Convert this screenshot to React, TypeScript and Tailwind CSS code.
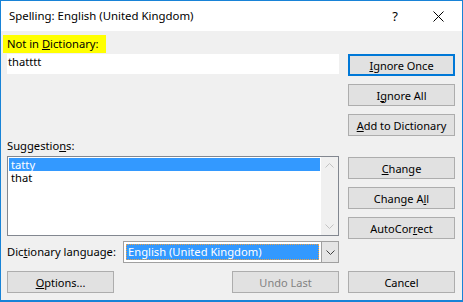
import type { ReactNode } from "react";

const FONT = "font-['Segoe_UI','Noto_Sans','Open_Sans',sans-serif]";

function U({ children }: { children: ReactNode }) {
  return <span className="underline underline-offset-[1px]">{children}</span>;
}

function Btn({
  children,
  focused = false,
  disabled = false,
  className = "",
}: {
  children: ReactNode;
  focused?: boolean;
  disabled?: boolean;
  className?: string;
}) {
  return (
    <div
      className={`flex h-[22px] w-[107px] shrink-0 items-center justify-center whitespace-nowrap bg-[#e1e1e1] text-[11px] leading-none ${
        focused ? "border-2 border-[#0078d7]" : "border border-[#adadad]"
      } ${disabled ? "text-[#838383]" : "text-black"} ${className}`}
    >
      <span>{children}</span>
    </div>
  );
}

function Chevron({ up = false, color = "#c2c2c2" }: { up?: boolean; color?: string }) {
  return (
    <svg width="9" height="5" viewBox="0 0 9 5" className="block">
      <path
        d={up ? "M0.5 4.5 L4.5 0.5 L8.5 4.5" : "M0.5 0.5 L4.5 4.5 L8.5 0.5"}
        fill="none"
        stroke={color}
        strokeWidth="1"
      />
    </svg>
  );
}

export default function App() {
  return (
    <div
      className={`flex h-[302px] w-[463px] flex-col border border-b-2 border-[#1883d7] bg-[#f0f0f0] text-black ${FONT}`}
    >
      {/* title bar */}
      <div className="flex h-[30px] shrink-0 items-center bg-white">
        <span className="pl-[8px] text-[11.4px] leading-none">Spelling: English (United Kingdom)</span>
        <div className="ml-auto flex h-full items-center pr-[4px]">
          <span className="flex w-[30px] justify-center text-[13px] leading-none">?</span>
          <span className="ml-[8px] flex h-full w-[40px] items-center justify-center">
            <svg width="11" height="11" viewBox="0 0 11 11">
              <path d="M0.5 0.5 L10.5 10.5 M10.5 0.5 L0.5 10.5" stroke="#000" strokeWidth="1" />
            </svg>
          </span>
        </div>
      </div>

      <div className="flex flex-1 pl-[6px] text-[11.2px]">
        {/* left column */}
        <div className="flex w-[332px] flex-col">
          <div className="mt-[4px] -ml-[4px] h-[18px] w-[103px] whitespace-nowrap bg-[#ffff00] pl-[4px] leading-[18px]">
            Not in <U>D</U>ictionary:
          </div>
          <div className="mt-[1px] h-[20px] bg-white pl-[1px] leading-[16px]">thatttt</div>

          <div className="mt-[64px] h-[16px] leading-[16px]">
            Suggestio<U>n</U>s:
          </div>
          <div className="mt-[2px] flex h-[80px] border border-[#828790] bg-white">
            <div className="flex-1 p-[1px] leading-[13px]">
              <div className="h-[13px] bg-[#3399ff] pl-[2px] text-white">tatty</div>
              <div className="h-[13px] pl-[2px]">that</div>
            </div>
            <div className="flex w-[17px] flex-col items-center justify-between bg-[#f0f0f0]">
              <div className="flex h-[17px] items-center justify-center">
                <Chevron up />
              </div>
              <div className="flex h-[17px] items-center justify-center">
                <Chevron />
              </div>
            </div>
          </div>

          <div className="mt-[5px] flex h-[22px] items-center">
            <span className="w-[116px] whitespace-nowrap leading-none">
              Dic<U>t</U>ionary language:
            </span>
            <div className="flex h-[22px] flex-1 border border-[#a0a0a0] bg-white">
              <div className="flex-1 p-[2px]">
                <div className="h-[16px] whitespace-nowrap border border-dotted border-[#f0a040] bg-[#3399ff] pl-[1px] leading-[14px] text-white">
                  English (United Kingdom)
                </div>
              </div>
              <div className="flex w-[17px] items-center justify-center border-l border-[#a0a0a0] bg-[#e5e5e5]">
                <Chevron color="#404040" />
              </div>
            </div>
          </div>

          <div className="mt-[8px] flex justify-between">
            <Btn>
              <U>O</U>ptions...
            </Btn>
            <Btn disabled>Undo Last</Btn>
          </div>
        </div>

        {/* right column */}
        <div className="ml-[9px] flex w-[107px] flex-col">
          <Btn focused className="mt-[23px]">
            <U>I</U>gnore Once
          </Btn>
          <Btn className="mt-[8px]">
            I<U>g</U>nore All
          </Btn>
          <Btn className="mt-[8px]">
            <U>A</U>dd to Dictionary
          </Btn>
          <Btn className="mt-[21px]">
            <U>C</U>hange
          </Btn>
          <Btn className="mt-[8px]">
            Change A<U>l</U>l
          </Btn>
          <Btn className="mt-[8px]">
            AutoCor<U>r</U>ect
          </Btn>
          <Btn className="mt-[32px]">Cancel</Btn>
        </div>
      </div>
    </div>
  );
}
